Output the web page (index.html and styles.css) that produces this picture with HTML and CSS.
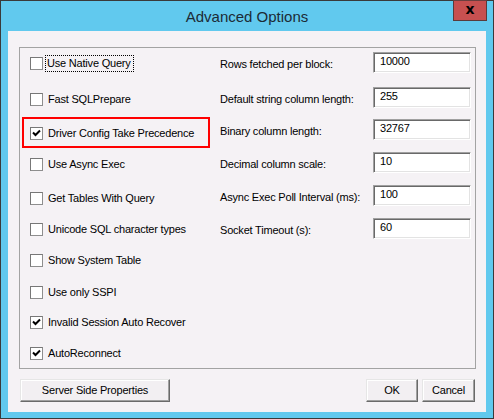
FILE: index.html
```
<!DOCTYPE html>
<html>
<head>
<meta charset="utf-8">
<link rel="stylesheet" href="styles.css">
</head>
<body>
<div class="window">
  <div class="titlebar">
    <div></div>
    <div class="title">Advanced Options</div>
    <div class="close-cell"><div class="close">x</div></div>
  </div>
  <div class="client">
    <div class="group">
      <div class="checks">
        <div class="row"><span class="cb"></span><span class="lbl focus">Use Native Query</span></div>
        <div class="row"><span class="cb"></span><span class="lbl">Fast SQLPrepare</span></div>
        <div class="row highlight"><span class="cb"><svg viewBox="0 0 11 11" width="11" height="11"><path d="M2 4.5 L4.5 7 L9 2.5" fill="none" stroke="#000" stroke-width="2"/></svg></span><span class="lbl">Driver Config Take Precedence</span></div>
        <div class="row"><span class="cb"></span><span class="lbl">Use Async Exec</span></div>
        <div class="row"><span class="cb"></span><span class="lbl">Get Tables With Query</span></div>
        <div class="row"><span class="cb"></span><span class="lbl">Unicode SQL character types</span></div>
        <div class="row"><span class="cb"></span><span class="lbl">Show System Table</span></div>
        <div class="row"><span class="cb"></span><span class="lbl">Use only SSPI</span></div>
        <div class="row"><span class="cb"><svg viewBox="0 0 11 11" width="11" height="11"><path d="M2 4.5 L4.5 7 L9 2.5" fill="none" stroke="#000" stroke-width="2"/></svg></span><span class="lbl">Invalid Session Auto Recover</span></div>
        <div class="row"><span class="cb"><svg viewBox="0 0 11 11" width="11" height="11"><path d="M2 4.5 L4.5 7 L9 2.5" fill="none" stroke="#000" stroke-width="2"/></svg></span><span class="lbl">AutoReconnect</span></div>
      </div>
      <div class="fields">
        <div class="frow"><span class="flbl">Rows fetched per block:</span><span class="tb">10000</span></div>
        <div class="frow"><span class="flbl">Default string column length:</span><span class="tb">255</span></div>
        <div class="frow"><span class="flbl">Binary column length:</span><span class="tb">32767</span></div>
        <div class="frow"><span class="flbl">Decimal column scale:</span><span class="tb">10</span></div>
        <div class="frow"><span class="flbl">Async Exec Poll Interval (ms):</span><span class="tb">100</span></div>
        <div class="frow"><span class="flbl">Socket Timeout (s):</span><span class="tb">60</span></div>
      </div>
    </div>
    <div class="buttons">
      <div class="btn wide">Server Side Properties</div>
      <div class="spacer"></div>
      <div class="btn ok">OK</div>
      <div class="btn cancel">Cancel</div>
    </div>
  </div>
</div>
</body>
</html>
```
FILE: styles.css
```
* { box-sizing: border-box; }
html, body { margin: 0; padding: 0; }
body {
  width: 494px;
  height: 419px;
  font-family: "Liberation Sans", Arial, sans-serif;
  font-size: 11px;
  color: #000;
  overflow: hidden;
}
.window {
  width: 494px;
  height: 419px;
  border: 1px solid #3a3a3a;
  background: #61c9ee;
  padding: 0 7px 6px 7px;
  display: flex;
  flex-direction: column;
}
.titlebar {
  height: 30px;
  display: grid;
  grid-template-columns: 1fr auto 1fr;
  margin: 0 -7px;
}
.title {
  font-size: 15px;
  color: #1c2b36;
  line-height: 30px;
  padding-top: 1px;
  text-align: center;
}
.close-cell {
  display: flex;
  justify-content: flex-end;
  align-items: flex-start;
  padding-right: 6px;
}
.close {
  width: 34px;
  height: 21px;
  margin-top: -1px;
  background: #c75050;
  border: 1px solid #5a3b3b;
  border-top-color: #6b3f3f;
  color: #000;
  font-family: "DejaVu Sans", sans-serif;
  font-weight: bold;
  font-size: 14px;
  line-height: 17px;
  text-align: center;
}
.client {
  flex: 1;
  background: #f5f2f5;
  padding: 16px 10px 0 11px;
  display: flex;
  flex-direction: column;
  letter-spacing: -0.2px;
}
.group {
  height: 322px;
  border: 1px solid #a3a3a3;
  display: grid;
  grid-template-columns: 200px 155px;
  align-items: start;
}
.checks {
  padding: 9px 0 0 10px;
  display: grid;
  grid-template-rows: 36px 34px 31px 34px 31px 31px 32px 30px 31px 31px;
}
.row {
  display: flex;
  align-items: center;
  height: 13px;
  position: relative;
  white-space: nowrap;
}
.cb {
  width: 13px;
  height: 13px;
  flex: none;
  background: #fff;
  border: 1px solid #8e8e8e;
  border-top-color: #777;
  border-left-color: #777;
  display: flex;
  align-items: center;
  justify-content: center;
}
.cb svg { display: block; }
.lbl {
  margin-left: 4px;
  line-height: 13px;
  padding: 1px 1px;
}
.focus {
  outline: 1px dotted #000;
  outline-offset: 0;
  padding: 1px 2px 1px 1px;
  margin-left: 3px;
}
.highlight::after {
  content: "";
  position: absolute;
  left: -8px;
  top: -10px;
  width: 184px;
  height: 27px;
  border: 2px solid #ff0000;
}
.fields {
  padding-top: 4px;
  display: grid;
  grid-template-rows: 35px 32px 33px 33px 33px 33px;
}
.frow {
  display: grid;
  grid-template-columns: 153px 98px;
  height: 21px;
  align-items: center;
  white-space: nowrap;
}
.flbl { padding-top: 3px; }
.tb {
  height: 21px;
  background: #fff;
  border: 1px solid;
  border-color: #a0a0a0 #fff #fff #a0a0a0;
  box-shadow: inset 1px 1px 0 #696969, inset -1px -1px 0 #e3e3e3;
  padding: 2px 0 0 6px;
  line-height: 13px;
}
.buttons {
  margin-top: 10px;
  padding-left: 1px;
  display: flex;
  gap: 4px;
}
.spacer { flex: 1; }
.btn {
  height: 23px;
  background: #f2eff2;
  border: 1px solid;
  border-color: #e6e6e6 #6a6a6a #6a6a6a #e6e6e6;
  box-shadow: inset -1px -1px 0 #a0a0a0, inset 1px 1px 0 #fff;
  text-align: center;
  line-height: 20px;
}
.wide { width: 150px; }
.ok { width: 52px; }
.cancel { width: 53px; margin-right: 1px; }
```
